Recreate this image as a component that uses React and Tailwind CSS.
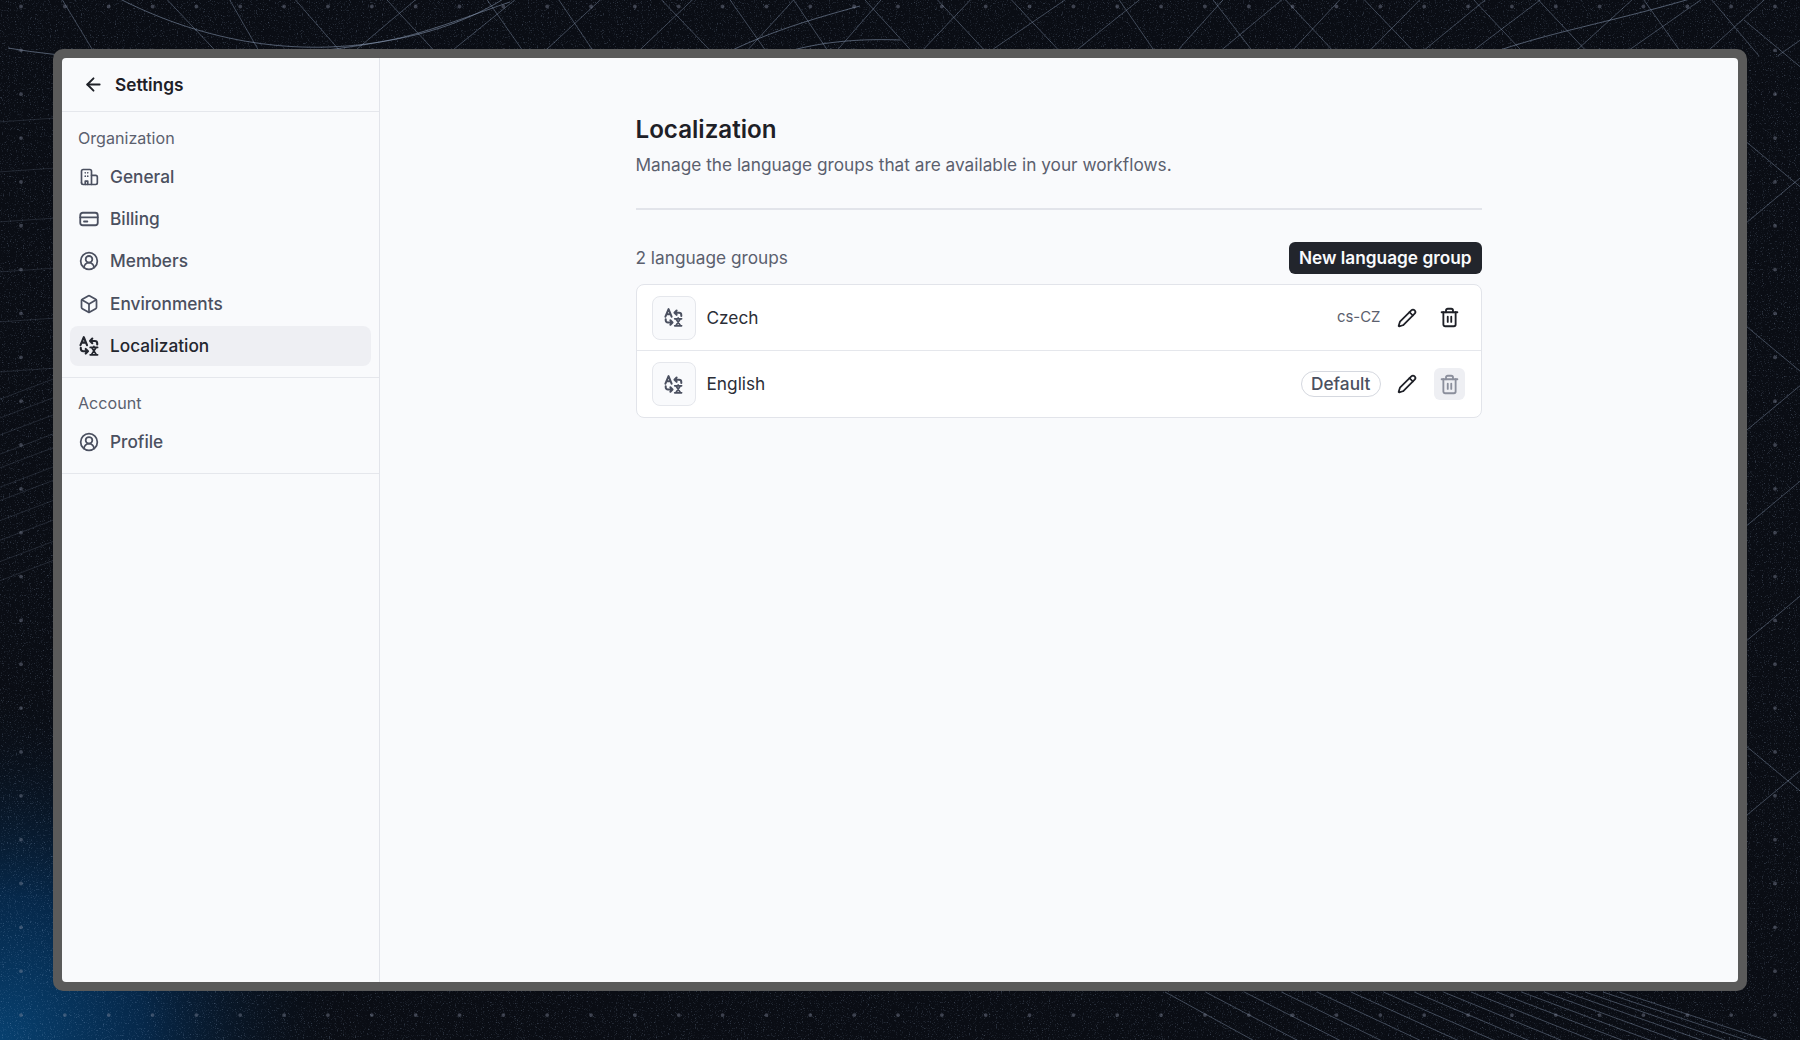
import { ArrowLeft, CircleUserRound, Box, Pencil, Trash2 } from 'lucide-react';

// seeded so the backdrop is the same on every load
const rand = (() => {
  let s = 12345;
  return () => {
    s = (s * 16807) % 2147483647;
    return (s - 1) / 2147483646;
  };
})();

const lines = [];
// top band: steep lines falling right and rising right
for (let x = 60; x < 1900; x += 62 + rand() * 50) {
  lines.push(`M${x} -4L${x + 34 + rand() * 24} 56`);
}
for (let x = 420; x < 1900; x += 50 + rand() * 70) {
  lines.push(`M${x} -4L${x - 50 - rand() * 40} 56`);
}
// right strip
for (let y = 20; y < 900; y += 70 + rand() * 70) {
  lines.push(`M1744 ${y}L1804 ${y + (rand() > 0.5 ? 50 : -50)}`);
}
// bottom right fan
for (let i = 0, x = 1165; x < 1620; i++, x += Math.max(12, 42 - i * 1.6)) {
  lines.push(`M${x} 992L${x + 95 + i * 4} 1044`);
}

// left strip: flat rules, then a rising bundle, all dimmer
const leftLines = [];
for (let y = 118; y < 370; y += 50) {
  leftLines.push(`M-2 ${y + 4}L56 ${y}`);
}
for (let y = 400; y < 590; y += 13 + rand() * 9) {
  leftLines.push(`M-2 ${y}L56 ${y - 22}`);
}

const curves = [
  'M118 -2C210 45 300 55 380 42C430 34 470 20 505 -2',
  'M8 48C120 68 300 60 400 38C440 28 480 12 510 2',
  'M780 54C810 44 850 38 900 40',
  'M860 6C800 22 760 36 720 56',
  'M1500 50C1560 30 1620 20 1700 -4',
];

const dots = [];
for (let x = 21; x < 1800; x += 43.85) {
  for (let y = 6.5; y < 1040; y += 43.85) dots.push([x, y]);
}

const Backdrop = () => (
  <svg className="absolute inset-0 w-full h-full" viewBox="0 0 1800 1040">
    <defs>
      <radialGradient id="glow" gradientUnits="userSpaceOnUse" cx="0" cy="1040" r="360">
        <stop offset="0" stopColor="#07406f" />
        <stop offset="0.4" stopColor="#06284a" />
        <stop offset="1" stopColor="#0a0d14" stopOpacity="0" />
      </radialGradient>
      <filter id="speckle">
        <feTurbulence type="fractalNoise" baseFrequency="0.85" numOctaves="2" seed="4" />
        <feColorMatrix values="0 0 0 0 0.45  0 0 0 0 0.6  0 0 0 0 0.85  0 0 0 3 -1.75" />
      </filter>
    </defs>
    <rect width="1800" height="1040" fill="#0a0d14" />
    <rect width="1800" height="1040" fill="url(#glow)" />
    <rect width="1800" height="1040" filter="url(#speckle)" opacity="0.3" />
    {lines.map((d, i) => (
      <path key={i} d={d} fill="none" stroke="#8a9ab5" strokeOpacity="0.48" strokeWidth="0.9" />
    ))}
    {leftLines.map((d, i) => (
      <path key={i} d={d} fill="none" stroke="#8a9ab5" strokeOpacity="0.22" strokeWidth="0.9" />
    ))}
    {curves.map((d, i) => (
      <path key={i} d={d} fill="none" stroke="#8a9ab5" strokeOpacity="0.55" strokeWidth="1" />
    ))}
    {dots.map(([cx, cy], i) => (
      <circle key={i} cx={cx} cy={cy} r="1.9" fill="#8a90a5" fillOpacity="0.4" />
    ))}
  </svg>
);

const BuildingIcon = ({ className }) => (
  <svg className={className} viewBox="0 0 24 24" fill="none" stroke="currentColor" strokeWidth="2" strokeLinecap="round" strokeLinejoin="round">
    <path d="M3 19V5a2 2 0 0 1 2-2h8a2 2 0 0 1 2 2v16" />
    <path d="M15 10h5a2 2 0 0 1 2 2v7a2 2 0 0 1-2 2H5a2 2 0 0 1-2-2" />
    <path d="M7.5 7h.01M10.5 7h.01M7.5 11h.01M10.5 11h.01M7.5 21v-4h3v4" />
  </svg>
);

const CardIcon = ({ className }) => (
  <svg className={className} viewBox="0 0 24 24" fill="none" stroke="currentColor" strokeWidth="2.2" strokeLinecap="round" strokeLinejoin="round">
    <rect x="1.5" y="4.5" width="21" height="15" rx="3" />
    <path d="M1.5 10h21M6 15h4" />
  </svg>
);

const TranslateIcon = ({ className }) => (
  <svg className={className} viewBox="0 0 20 20" fill="none" stroke="currentColor" strokeLinecap="round" strokeLinejoin="round">
    <path d="M1.5 9.2L4.8 1.2L8 9.2M2.8 6.6H6.8" strokeWidth="2.1" />
    <path d="M11 5H15.8C17.4 5 18.2 6 18.2 7.4V8.4M11 5L13.3 2.6M11 5L13.3 7.2" strokeWidth="2.1" />
    <path d="M9 15.2H4.2C2.6 15.2 1.8 14.2 1.8 12.8V11.8M9 15.2L6.7 12.9M9 15.2L6.7 17.6" strokeWidth="2.1" />
    <path d="M11.2 11.4H18.6M14.9 10.4V11.4M12.8 11.8L17.2 18.4M17 11.8L12.6 18.4M11.2 18.8H18.6" strokeWidth="1.7" />
  </svg>
);

const NavItem = ({ icon: Icon, label, active }) => (
  <div className={`flex items-center h-10 mx-2 px-[9px] rounded-lg gap-[11px] text-[17.25px] font-medium ${active ? 'bg-[#eeeff3] text-[#23262e]' : 'text-[#4b5060]'}`}>
    <Icon className="w-[20px] h-[20px] shrink-0" strokeWidth={2.1} />
    {label}
  </div>
);

const Row = ({ name, children, last }) => (
  <div className={`flex items-center h-[66px] pl-[15px] pr-4 ${last ? '' : 'border-b border-[#e5e7ec]'}`}>
    <div className="flex items-center justify-center w-[44px] h-[44px] rounded-lg border border-[#e5e7ec] bg-[#f9fafc] text-[#4b5060]">
      <TranslateIcon className="w-[19px] h-[19px]" />
    </div>
    <span className="ml-[11px] text-[17.25px] text-[#2b2e37]">{name}</span>
    <div className="flex items-center ml-auto">{children}</div>
  </div>
);

export default function App() {
  return (
    <div className="relative w-[1800px] h-[1040px] overflow-hidden bg-[#0a0d14] font-['Inter',sans-serif]">
      <Backdrop />
      <div className="relative pt-[49px] pl-[53px]">
        <div className="w-[1694px] h-[942px] p-[9px] rounded-[10px] bg-[#5a5a5a]">
          <div className="flex h-full rounded-[4px] overflow-hidden bg-[#f9fafc]">
            <aside className="w-[318px] shrink-0 border-r border-[#e2e4ea]">
              <div className="flex items-center h-[54px] pl-[21px] gap-[11px] border-b border-[#e5e7ec] text-[#1e2027]">
                <ArrowLeft className="w-[21px] h-[21px]" strokeWidth={2.2} />
                <span className="text-[17.25px] font-semibold">Settings</span>
              </div>
              <div className="pt-[14px] pb-[10px] border-b border-[#e5e7ec] h-[266px]">
                <div className="px-4 text-[16.1px] leading-[24px] text-[#5b606e]">Organization</div>
                <div className="flex flex-col gap-[2.4px] mt-[6.5px]">
                  <NavItem icon={BuildingIcon} label="General" />
                  <NavItem icon={CardIcon} label="Billing" />
                  <NavItem icon={CircleUserRound} label="Members" />
                  <NavItem icon={Box} label="Environments" />
                  <NavItem icon={TranslateIcon} label="Localization" active />
                </div>
              </div>
              <div className="pt-[13px] h-[96px] border-b border-[#e5e7ec]">
                <div className="px-4 text-[16.1px] leading-[24px] text-[#5b606e]">Account</div>
                <div className="mt-[7px]">
                  <NavItem icon={CircleUserRound} label="Profile" />
                </div>
              </div>
            </aside>
            <main className="flex-1 flex justify-center pr-px">
              <div className="w-[846px] pt-[56px]">
                <h1 className="text-[24.15px] leading-[32px] font-semibold text-[#1e2027]">Localization</h1>
                <p className="mt-[6px] text-[17.25px] leading-[26px] text-[#5b606e]">Manage the language groups that are available in your workflows.</p>
                <div className="mt-[30px] border-t-2 border-[#e2e4ea]" />
                <div className="flex items-center justify-between mt-[32px]">
                  <span className="text-[17.25px] leading-[30px] text-[#5b606e]">2 language groups</span>
                  <button className="h-[32px] px-[10px] rounded-md bg-[#22252c] text-[#f9fafc] text-[17.25px] font-semibold">New language group</button>
                </div>
                <div className="mt-[10px] rounded-lg border border-[#e2e4ea] bg-white">
                  <Row name="Czech">
                    <span className="text-[14.95px] text-[#5b606e] mr-[16px]">cs-CZ</span>
                    <Pencil className="w-[20px] h-[20px] text-[#1e2027]" strokeWidth={2.1} />
                    <span className="flex items-center justify-center w-[31px] h-[32px] ml-[17px] text-[#1e2027]">
                      <Trash2 className="w-[21px] h-[21px]" strokeWidth={2.1} />
                    </span>
                  </Row>
                  <Row name="English" last>
                    <span className="flex items-center h-[26px] px-[9px] rounded-full border border-[#d5d8df] text-[17.25px] font-medium text-[#4b5060] mr-[16px]">Default</span>
                    <Pencil className="w-[20px] h-[20px] text-[#1e2027]" strokeWidth={2.1} />
                    <span className="flex items-center justify-center w-[31px] h-[32px] ml-[17px] rounded-md bg-[#eeeff3] text-[#8b8f9c]">
                      <Trash2 className="w-[21px] h-[21px]" strokeWidth={2.1} />
                    </span>
                  </Row>
                </div>
              </div>
            </main>
          </div>
        </div>
      </div>
    </div>
  );
}
